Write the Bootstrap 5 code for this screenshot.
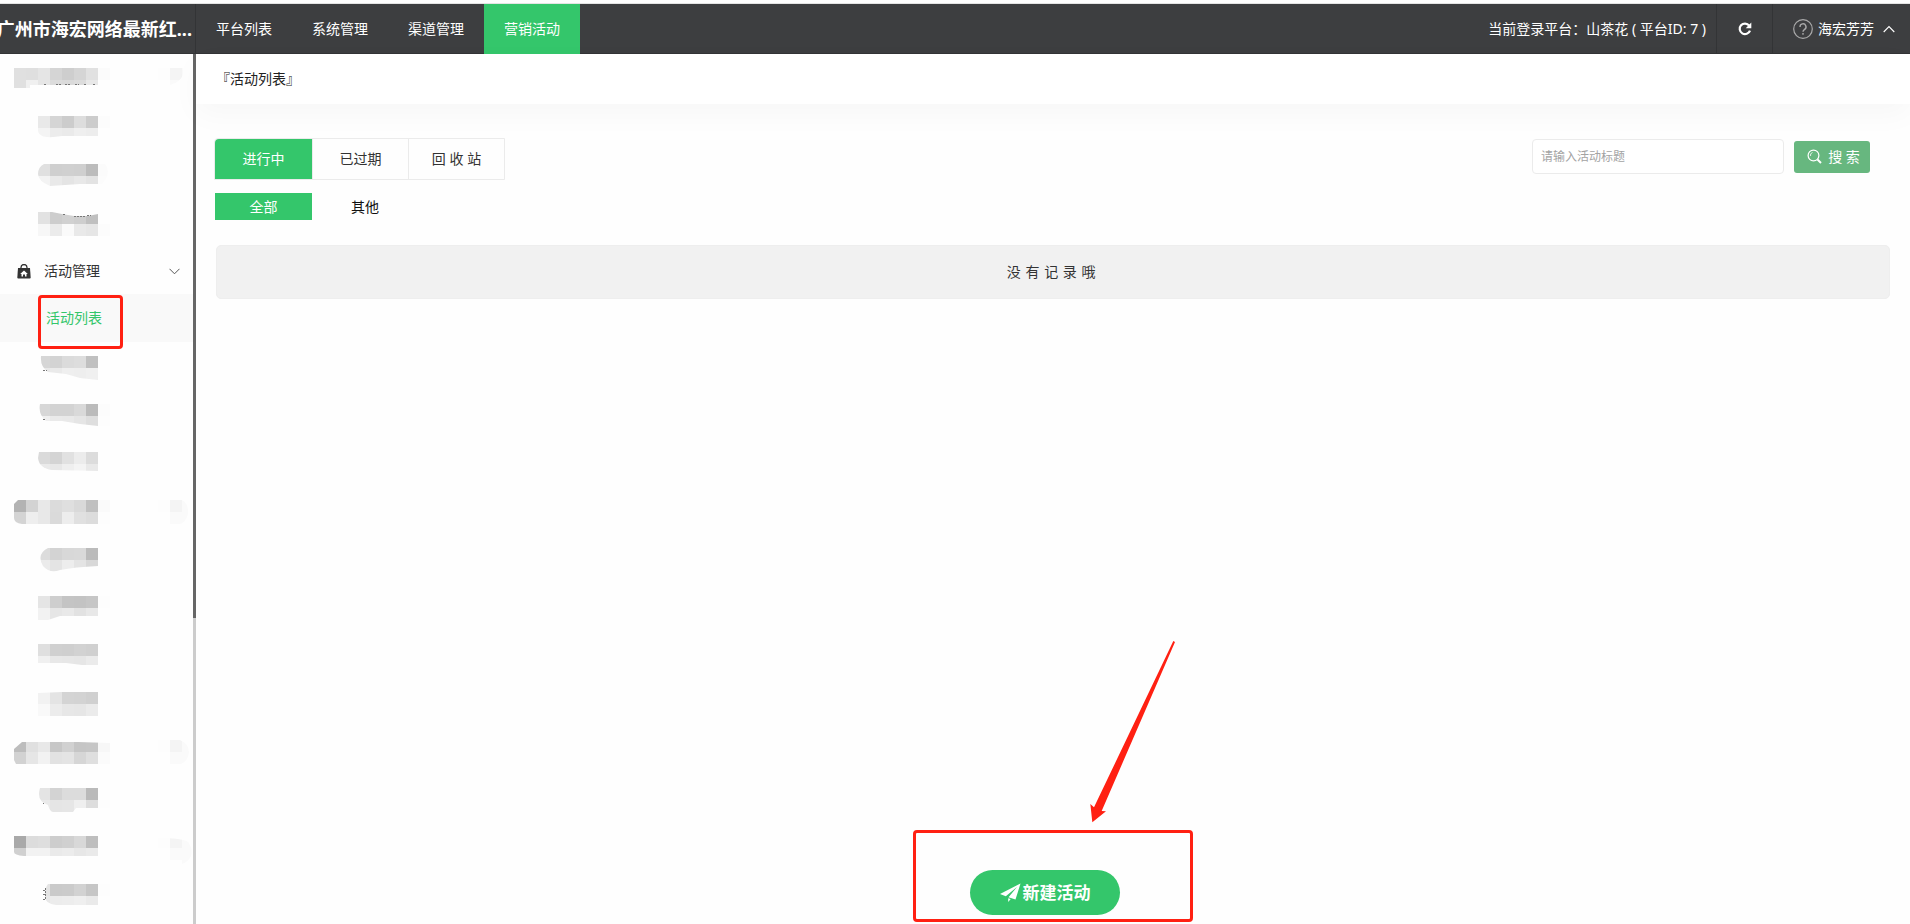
<!DOCTYPE html>
<html lang="zh-CN">
<head>
<meta charset="utf-8">
<meta name="viewport" content="width=device-width, initial-scale=1">
<title>活动列表</title>
<link href="https://cdn.jsdelivr.net/npm/bootstrap@5.3.0/dist/css/bootstrap.min.css" rel="stylesheet">
<style>
  body { font-family: "Noto Sans", "Noto Sans CJK SC", sans-serif; font-size: 14px; line-height: 20px; color: #333; background: #fefefe; }
  a { color: inherit; text-decoration: none; }
  .topbar { margin-top: 3px; height: 51px; background: #3d3e40; color: #fff; border-top: 1px solid #e4e4e4; box-shadow: inset 0 -1px #333436; }
  .brand { width: 196px; padding-right: 3px; font-size: 18px; font-weight: 700; border-right: 1px solid #333436; }
  .topbar .nav-link { padding: 0 20px; color: #fff; }
  .topbar .nav-link.active { background: #34c66b; }
  .cell { padding: 0 10px; }
  .cell + .cell { border-left: 1px solid #333436; }
  .refresh { width: 56px; background: none; border: 0; color: #fff; }
  .user { width: 138px; padding: 0 15px 0 20px; gap: 5px; background: none; border: 0; color: #fff; }
  .side { width: 196px; }
  .side li { height: 48px; }
  .side svg.mosaic { display: block; }
  .track { width: 3px; background: #ccc; }
  .thumb { height: 64.8%; background: #666; }
  .group { padding: 2px 13px 0 17px; gap: 13px; color: #333; }
  .current { background: #f9f9f9; color: #34c66b; padding-left: 46px; }
  .mark-side { left: 38px; top: 1px; width: 85px; height: 54px; }
  .redbox { position: absolute; border: 3px solid #ff2012; border-radius: 4px; pointer-events: none; }
  .page-title { height: 50px; padding: 0 20px; background: #fff; color: #222; box-shadow: 0 10px 30px rgba(0,20,10,.03); }
  .work { padding: 34px 20px 0 19px; }
  .tabs { border: 1px solid #ebebeb; border-radius: 4px 0 0 0; margin-left: -1px; }
  .tabs button, .subs button { border: 0; background: none; color: #333; width: 96px; padding: 0; height: 40px; }
  .tabs button + button { border-left: 1px solid #ebebeb; }
  .tabs button.on, .subs button.on { background: #34c66b; color: #fff; width: 97px; }
  .tabs button.on { border-radius: 4px 0 0 0; }
  .subs { margin-top: 13px; gap: 5px; }
  .subs button { height: 27px; color: #111; }
  .find { padding: 1px 20px 0 0; gap: 10px; }
  .find .form-control { width: 252px; height: 35px; padding: 0 8px; font-size: 12px; border: 1px solid #ebebeb; border-radius: 4px; }
  .find .form-control::placeholder { color: #a3a3a3; }
  .find .go { width: 76px; height: 32px; gap: 6px; padding: 0 0 0 3px; background: #67b77f; color: #fff; border: 0; border-radius: 3px; font-size: 14px; }
  .empty { margin: 25px 0 0 1px; height: 54px; background: #f1f1f1; border: 1px solid #eee; border-radius: 5px; }
  .foot { padding: 0 16px 9px 0; }
  .create { width: 150px; height: 45px; border: 0; border-radius: 23px; background: #34c66b; color: #fff; font-size: 17px; font-weight: 700; gap: 2px; }
  .mark-create { left: -57px; right: -73px; top: -40px; bottom: -7px; }
  .arrow { position: absolute; left: 120px; top: -230px; pointer-events: none; }
</style>
</head>
<body class="d-flex flex-column min-vh-100">
<header class="topbar d-flex align-items-stretch">
  <div class="brand d-flex align-items-center justify-content-end text-nowrap flex-shrink-0">广州市海宏网络最新红...</div>
  <nav class="nav flex-nowrap text-nowrap">
    <a class="nav-link d-flex align-items-center" href="#">平台列表</a>
    <a class="nav-link d-flex align-items-center" href="#">系统管理</a>
    <a class="nav-link d-flex align-items-center" href="#">渠道管理</a>
    <a class="nav-link d-flex align-items-center active" href="#">营销活动</a>
  </nav>
  <div class="ms-auto d-flex text-nowrap">
    <div class="cell d-flex align-items-center">当前登录平台：山茶花 ( 平台ID: 7 )</div>
    <button class="cell refresh d-flex align-items-center justify-content-center" type="button" aria-label="刷新">
      <svg width="14" height="14" viewBox="0 0 14 14"><path d="M11.2 3.6A5.3 5.3 0 1 0 12 8.6" fill="none" stroke="#fff" stroke-width="2.2"/><path d="M13.3.6v5.6H7.7z" fill="#fff"/></svg>
    </button>
    <button class="cell user d-flex align-items-center" type="button">
      <svg width="20" height="20" viewBox="0 0 20 20" fill="none" stroke="#aaa"><circle cx="10" cy="10" r="9.3" stroke-width="1.2"/><path d="M7 8a3 3 0 1 1 4.6 2.4C10.4 11.200 10 11.600 10 12.800M10 14v1.700" stroke-width="1.4"/></svg>
      <span>海宏芳芳</span>
      <svg class="ms-auto" width="12" height="8" viewBox="0 0 12 8"><path d="M.7 7 6 1.500 11.300 7" fill="none" stroke="#fff" stroke-width="1.100"/></svg>
    </button>
  </div>
</header>

<div class="d-flex flex-grow-1">
  <aside class="side d-flex flex-shrink-0">
    <ul class="list-unstyled m-0 flex-grow-1" id="menu">
      <li class="group d-flex align-items-center">
        <svg width="14" height="15" viewBox="0 0 14 15"><path d="M4 5V3.500a3 3 0 0 1 6 0V5" fill="none" stroke="#333" stroke-width="1.300"/><path d="M1 4h12l.7 9.500q0 1-1 1H1.300q-1 0-1-1z" fill="#333"/><path d="m7 6.500 3.800 3.500H9.500v2.500H8v-2H6v2H4.500V10H3.200z" fill="#fff"/></svg>
        <span>活动管理</span>
        <svg class="ms-auto" width="11" height="7" viewBox="0 0 11 7"><path d="m.5.8 5 5 5-5" fill="none" stroke="#555"/></svg>
      </li>
      <li class="current d-flex align-items-center position-relative">
        <a href="#">活动列表</a><span class="redbox mark-side"></span>
      </li>
    </ul>
    <div class="track"><div class="thumb"></div></div>
  </aside>

  <main class="flex-grow-1 d-flex flex-column">
    <div class="page-title d-flex align-items-center">『活动列表』</div>
    <div class="work">
      <div class="d-flex justify-content-between align-items-start">
        <div class="tabs d-flex">
          <button class="on" type="button">进行中</button>
          <button type="button">已过期</button>
          <button type="button">回 收 站</button>
        </div>
        <form class="find d-flex align-items-center">
          <input class="form-control" type="text" placeholder="请输入活动标题" aria-label="活动标题">
          <button class="go d-flex align-items-center justify-content-center" type="button">
            <svg width="15" height="15" viewBox="0 0 15 15" fill="none" stroke="#fff"><circle cx="6.500" cy="6.500" r="5.400" stroke-width="1.200"/><path d="M3.500 7a3 3 0 0 1 2-3.500" stroke-width=".8"/><path d="m10.500 10.500 3.500 3.500" stroke-width="2"/></svg>
            <span>搜 索</span>
          </button>
        </form>
      </div>
      <div class="subs d-flex">
        <button class="on" type="button">全部</button>
        <button type="button">其他</button>
      </div>
      <div class="empty d-flex align-items-center justify-content-center">没&#8196;有&#8196;记&#8196;录&#8196;哦&nbsp;</div>
    </div>
    <div class="foot mt-auto d-flex justify-content-center">
      <div class="position-relative">
        <button class="create d-flex align-items-center justify-content-center" type="button">
          <svg width="21" height="20" viewBox="0 0 21 20" fill="#fff"><path d="M20.500.5 0 11l5.800 2.300L17 4 8.500 14.200l7 2.300zM8.200 15.200V19l2.500-2.900z"/></svg>
          <span>新建活动</span>
        </button>
        <span class="redbox mark-create"></span>
        <svg class="arrow" width="86" height="183" viewBox="600 60 258 549"><path d="M850 63l5 3L635 573l13 1-41 33-6-55 11 10z" fill="#ff2012"/></svg>
      </div>
    </div>
  </main>
</div>

<script>
/* Masked menu entries: two bands of 12px grey cells, trimmed by an outline; `tail` is the faint patch at the right. */
const before = [
  { x: 14, t: 'e0 df e5 d5 ce d5 e1 fb', b: 'e0 f0 e6 dc da dc e8 fe', d: 'M14 14H110V26H98V31H30V34H14z', ink: 'M44 30.500H47M56 30.500H62M65 30.500H71M75 30.500H79M84 30.500H86M93 30.500H95', tail: 'M158 14H183V20Q181 28 170 31V26H158z' },
  { x: 38, t: 'e9 d5 cc dd cc fc', b: 'f4 ec ea ef ed fe', d: 'M38 14H110V26H98V34H62Q38 38 38 28z' },
  { x: 38, t: 'e0 cf d0 cf bc fb', b: 'f3 e9 e4 e8 e3 fc', d: 'M44 14H105Q112 23 102 34H80L50 36Q38 31 38 24Q38 17 44 14z' },
  { x: 38, t: 'e2 cd d1 ce c0 fe', b: 'f7 eb fa e9 e6 fc', d: 'M38 14H52L62 16L74 18H88L98 16V24H110V38H38z', ink: 'M63 16L66 18M74 18H85M87 17.500H91' }
];
const after = [
  { x: 38, t: 'd6 d3 db dd c0 fe', b: 'e8 ea ef ee f0 fe', d: 'M41 14H104Q108 20 106 26H98V38L80 36L66 32L48 30Q40 25 41 14z', ink: 'M43 28H47' },
  { x: 38, t: 'd7 d3 d3 d9 bb fc', b: 'ef ea e9 e5 de fd', d: 'M40 14H110V36H98L80 34L62 31H46Q38 24 40 14z', ink: 'M43 29H45' },
  { x: 38, t: 'da d4 e1 ec dc', b: 'ea e8 ef f4 e9', d: 'M39 14H98V33L52 32Q39 30 38 20z' },
  { x: 14, t: 'b3 d3 e8 db df d9 c0 fa', b: 'd4 ee e8 da ed e0 dc fd', d: 'M18 14H110V38H22Q14 37 14 32V18z', tail: 'M158 14H182Q189 18 188 28Q186 36 180 38H170V26H158z' },
  { x: 38, t: 'dc d3 d8 d9 bb fe', b: 'eb e4 ed e4 d8 fe', d: 'M48 14H110V32H98Q75 33 60 36Q50 40 43 32Q36 20 48 14z' },
  { x: 38, t: 'e5 ce c4 c3 c6 fd', b: 'f2 e6 e9 e2 e8 fe', d: 'M38 14H110V34H60L48 38H38z' },
  { x: 38, t: 'df d0 cf d2 d0', b: 'f0 e8 e7 e6 eb', d: 'M38 14H98V35H82L66 33H38z' },
  { x: 38, t: 'f2 e4 d4 d3 d0', b: 'f9 ec e7 e6 eb', d: 'M38 15L62 14H98V38H38z' },
  { x: 14, t: 'bd e0 e8 c7 d1 c5 c6 f7', b: 'd2 e6 f2 e2 e4 d6 df fb', d: 'M22 16H78L110 17V38H16L14 34V23z', tail: 'M158 14H180Q188 17 189 26Q188 35 181 38H170V26H158z' },
  { x: 38, t: 'e4 d3 dc dc ba fe', b: 'ea e5 e6 ef dd fd', d: 'M40 14H110V34H76L73 38H53Q50 38 48 31Q36 27 40 14z', ink: 'M43 29.500H44' },
  { x: 14, t: 'a9 dc de cd d0 d8 be', b: 'd0 f2 f2 ea ec e7 ea', d: 'M14 14H98V34H24Q14 33 14 30z', tail: 'M158 16Q182 16 188 20Q193 26 191 34Q188 40 182 42V38H170V26H158z' },
  { x: 38, t: 'e4 ca cb d2 c6 fd', b: 'e8 ec ed ef ea fe', d: 'M48 14H110V34H98V35H56Q45 34 45 26Q45 17 48 14z', ink: 'M43 20.500H45M43 24.500H45M43 29H46M45.500 18V30' }
];
let n = 0;
function row(r) {
  const id = 'mask' + n++;
  const band = (list, y, h) => list.split(' ').map((g, i) =>
    `<rect x="${r.x + i * 12}" y="${y}" width="12" height="${h}" fill="#${g + g + g}"/>`).join('');
  return `<li aria-hidden="true"><svg class="mosaic" width="193" height="48" shape-rendering="crispEdges">
    <clipPath id="${id}"><path d="${r.d}"/></clipPath>
    <g clip-path="url(#${id})">${band(r.t, 14, 12)}${band(r.b, 26, 14)}</g>
    ${r.tail ? `<clipPath id="${id}t"><path d="${r.tail}"/></clipPath><g clip-path="url(#${id}t)"><path d="M158 14h12v12h-12z" fill="#fdfdfd"/><path d="M170 14h12v12h-12z" fill="#f4f4f4"/><path d="M182 14h12v30h-12zM170 26h12v18h-12z" fill="#fafafa"/></g>` : ''}
    ${r.ink ? `<path d="${r.ink}" fill="none" stroke="#777" stroke-dasharray="2 1"/>` : ''}</svg></li>`;
}
const menu = document.getElementById('menu');
menu.insertAdjacentHTML('afterbegin', before.map(row).join(''));
menu.insertAdjacentHTML('beforeend', after.map(row).join(''));
</script>
<script src="https://cdn.jsdelivr.net/npm/bootstrap@5.3.0/dist/js/bootstrap.bundle.min.js"></script>
</body>
</html>
